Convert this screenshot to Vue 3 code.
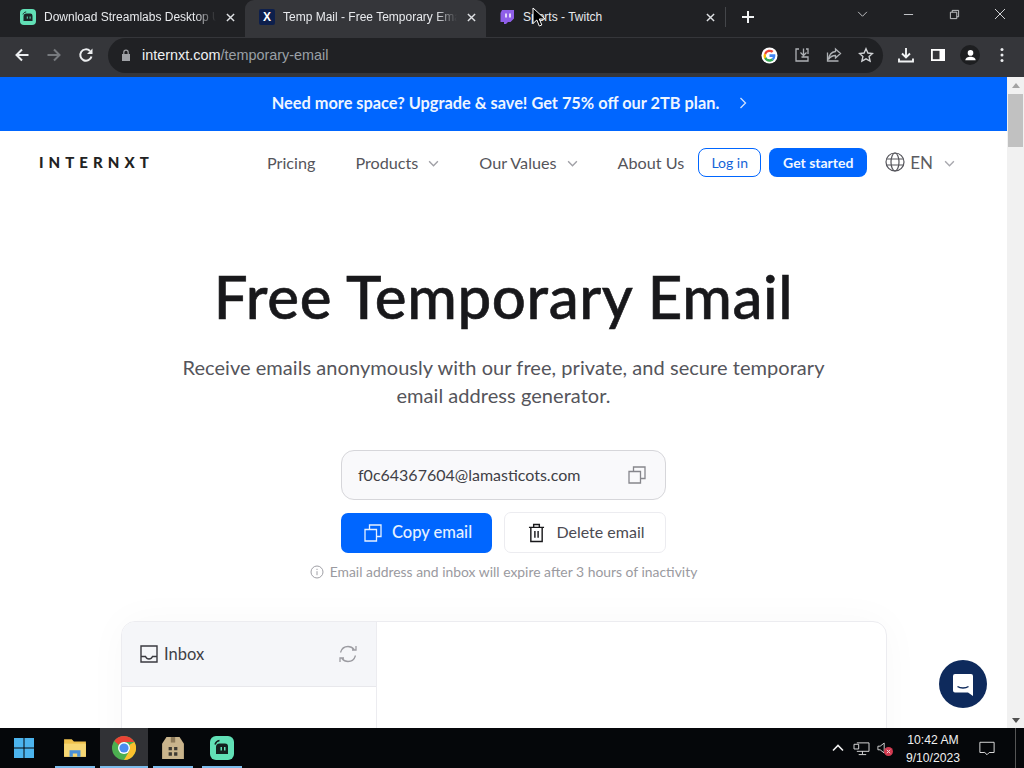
<template>
  <div class="screen">
    <div class="tabbar">
      <div class="tab first">
        <svg class="fav" viewBox="0 0 16 16"><rect width="16" height="16" rx="4" fill="#61e0b6"/><path d="M3.500 12V7.500a3 3 0 0 1 3-3h3.700a2.300 2.300 0 0 1 2.300 2.300V12z" fill="#1b2527"/><path d="M3 5.500C3.500 3.800 4.800 3 6.200 3" fill="none" stroke="#1b2527" stroke-width="1"/><rect x="6.800" y="7.500" width="1" height="2.200" fill="#61e0b6"/><rect x="9.600" y="7.500" width="1" height="2.200" fill="#61e0b6"/></svg>
        <span class="tab-title">Download Streamlabs Desktop UI</span>
        <svg class="tab-x" viewBox="0 0 10 10"><path d="M1 1l8 8M9 1l-8 8"/></svg>
      </div>
      <div class="tab active">
        <span class="fav xfav">X</span>
        <span class="tab-title">Temp Mail - Free Temporary Email</span>
        <svg class="tab-x" viewBox="0 0 10 10"><path d="M1 1l8 8M9 1l-8 8"/></svg>
      </div>
      <div class="tab third">
        <svg class="fav" viewBox="0 0 16 16"><path d="M3 1h12v8.500L11.500 13H9l-2 2H5v-2H1.500V4z" fill="#8f5fe8"/><path d="M7 4.500v4M11 4.500v4" stroke="#fff" stroke-width="1.500"/></svg>
        <span class="tab-title">Sports - Twitch</span>
        <svg class="tab-x" viewBox="0 0 10 10"><path d="M1 1l8 8M9 1l-8 8"/></svg>
      </div>
      <div class="tab-sep"></div>
      <svg class="plus" viewBox="0 0 14 14"><path d="M7 1v12M1 7h12"/></svg>
      <div class="spacer"></div>
      <svg class="win-ic chev" viewBox="0 0 12 8"><path d="M1 1l5 5 5-5"/></svg>
      <svg class="win-ic min" viewBox="0 0 12 12"><path d="M1 6h10"/></svg>
      <svg class="win-ic max" viewBox="0 0 12 12"><path d="M1.500 3.500h7v7h-7zM3.500 3.500v-2h7v7h-2"/></svg>
      <svg class="win-ic cls" viewBox="0 0 12 12"><path d="M1 1l10 10M11 1L1 11"/></svg>
    </div>

    <div class="toolbar">
      <svg class="nav back" viewBox="0 0 16 16"><path d="M14.500 8H2.500M8 2.500L2.500 8 8 13.500"/></svg>
      <svg class="nav fwd" viewBox="0 0 16 16"><path d="M1.500 8h12M8 2.500L13.500 8 8 13.500"/></svg>
      <svg class="nav reload" viewBox="0 0 16 16"><path d="M13.500 9.500A5.700 5.700 0 1 1 12 4"/><path class="fill" d="M14.500 1.500v5.500H9z"/></svg>
      <div class="omnibox">
        <svg class="lock" viewBox="0 0 10 12"><path d="M1 5h8v7H1z" fill="#a0a2a6"/><path d="M2.800 5V3.400a2.200 2.200 0 0 1 4.400 0V5" fill="none" stroke="#a0a2a6" stroke-width="1.200"/></svg>
        <span class="url"><b>internxt.com</b>/temporary-email</span>
        <div class="spacer"></div>
        <svg class="omni-ic gicon" viewBox="0 0 18 18"><circle cx="9" cy="9" r="8.500" fill="#fff"/><path d="M15.200 9.200c0-.5 0-1-.1-1.400H9v2.700h3.500a3 3 0 0 1-1.300 2l2 1.600a6.200 6.200 0 0 0 2-4.900z" fill="#4285f4"/><path d="M9 15.500c1.700 0 3.200-.6 4.200-1.600l-2-1.600c-.6.400-1.300.7-2.200.7a3.800 3.800 0 0 1-3.600-2.700l-2.100 1.600A6.400 6.400 0 0 0 9 15.500z" fill="#34a853"/><path d="M5.400 10.800a3.900 3.900 0 0 1 0-2.500L3.300 6.700a6.500 6.500 0 0 0 0 5.700z" fill="#fbbc05"/><path d="M9 5.200c1 0 1.800.3 2.500 1l1.800-1.900A6.400 6.400 0 0 0 3.300 6.700l2.100 1.600A3.800 3.800 0 0 1 9 5.200z" fill="#ea4335"/></svg>
        <svg class="omni-ic line" viewBox="0 0 16 16"><path d="M5 2H2v12h12v-4H7.500M9.500 1.500v7M6.500 5.500l3 3 3-3M12 2h2v5"/></svg>
        <svg class="omni-ic line" viewBox="0 0 16 16"><path d="M9.500 2l5 4.500-5 4.500V8.500C6 8.500 4 10 2.500 12.500 3 8.500 5.500 5 9.500 4.500zM12.500 14H1.500V5.500"/></svg>
        <svg class="omni-ic star" viewBox="0 0 16 16"><path d="M8 1.800l1.900 4.200 4.600.5-3.400 3.100 1 4.500L8 11.800l-4.100 2.300 1-4.500-3.400-3.100 4.600-.5z"/></svg>
      </div>
      <svg class="tool-ic dl" viewBox="0 0 16 16"><path d="M8 1v9M4 6.500L8 10.500 12 6.500M1 11.500v3h14v-3"/></svg>
      <svg class="tool-ic side" viewBox="0 0 16 16"><rect x="1" y="2" width="14" height="12" fill="#fff"/><rect x="2.800" y="3.800" width="6.700" height="8.400" fill="#35363a"/></svg>
      <div class="avatar"><svg viewBox="0 0 16 16"><circle cx="8" cy="5.200" r="3" fill="#fff"/><path d="M2.500 13c0-2.800 3-3.800 5.500-3.800s5.500 1 5.500 3.800z" fill="#fff"/></svg></div>
      <svg class="tool-ic dots" viewBox="0 0 4 16"><circle cx="2" cy="2.500" r="1.500"/><circle cx="2" cy="8" r="1.500"/><circle cx="2" cy="13.500" r="1.500"/></svg>
    </div>

    <div class="viewport">
      <main class="page">
        <div class="banner">
          <span>Need more space? Upgrade &amp; save! Get 75% off our 2TB plan.</span>
          <svg viewBox="0 0 8 12"><path d="M1.500 1l5 5-5 5"/></svg>
        </div>
        <header class="nav-row">
          <div class="logo">INTERNXT</div>
          <nav class="links">
            <a>Pricing</a>
            <a>Products<svg viewBox="0 0 12 8"><path d="M1 1.500l5 5 5-5"/></svg></a>
            <a>Our Values<svg viewBox="0 0 12 8"><path d="M1 1.500l5 5 5-5"/></svg></a>
            <a>About Us</a>
          </nav>
          <button class="login">Log in</button>
          <button class="start">Get started</button>
          <div class="lang">
            <svg class="globe" viewBox="0 0 20 20"><circle cx="10" cy="10" r="9"/><ellipse cx="10" cy="10" rx="4" ry="9"/><path d="M1.500 7h17M1.500 13h17"/></svg>
            <span>EN</span>
            <svg class="lang-chev" viewBox="0 0 12 8"><path d="M1 1.500l5 5 5-5"/></svg>
          </div>
        </header>
        <section class="hero">
          <h1>Free Temporary Email</h1>
          <p class="lead">Receive emails anonymously with our free, private, and secure temporary<br>email address generator.</p>
          <div class="address">
            <span>f0c64367604@lamasticots.com</span>
            <svg viewBox="0 0 18 18"><path d="M1 5.500h11.500V17H1zM5.500 5.500V1H17v11.500h-4.500"/></svg>
          </div>
          <div class="actions">
            <button class="copy"><svg viewBox="0 0 18 18"><path d="M1 5.500h11.500V17H1zM5.500 5.500V1H17v11.500h-4.500"/></svg>Copy email</button>
            <button class="delete"><svg viewBox="0 0 18 20"><path d="M1 4h16M3 4v15h12V4M6 4V1h6v3M7.300 8v7M10.700 8v7"/></svg>Delete email</button>
          </div>
          <div class="note">
            <svg viewBox="0 0 14 14"><circle cx="7" cy="7" r="6"/><path d="M7 6.200v4M7 3.800v1.200"/></svg>
            <span>Email address and inbox will expire after 3 hours of inactivity</span>
          </div>
        </section>
        <div class="inbox-card">
          <aside class="side-col">
            <div class="side-head">
              <svg class="tray" viewBox="0 0 18 18"><path d="M1 1h16v16H1zM1 11.500h4.500c.8 2 2 2.500 3.500 2.500s2.700-.5 3.500-2.500H17"/></svg>
              <span>Inbox</span>
              <div class="spacer"></div>
              <svg class="refresh" viewBox="0 0 20 20"><path d="M2.500 8.500C3.500 5 6.500 2.500 10 2.500c2.500 0 4.500 1 6 3M18 2v4h-4M17.500 11.500C16.500 15 13.500 17.500 10 17.500c-2.500 0-4.500-1-6-3M2 18v-4h4"/></svg>
            </div>
          </aside>
        </div>
        <button class="chat">
          <svg viewBox="0 0 22 24"><path d="M3 1h16a2 2 0 0 1 2 2v20l-5-3.500H3a2 2 0 0 1-2-2V3a2 2 0 0 1 2-2z" fill="#fff"/><path d="M5.500 13.500c3 2 8 2 11 0" fill="none" stroke="#0e2a5c" stroke-width="1.500"/></svg>
        </button>
      </main>
      <div class="scrollbar">
        <div class="sb-up"></div>
        <div class="sb-thumb"></div>
        <div class="spacer"></div>
        <div class="sb-down"></div>
      </div>
    </div>

    <footer class="taskbar">
      <div class="task-item start-btn">
        <svg viewBox="0 0 20 20"><path d="M0 0h9.500v9.500H0zM10.500 0H20v9.500h-9.500zM0 10.500h9.500V20H0zM10.500 10.500H20V20h-9.500z" fill="#4cb4ee"/></svg>
      </div>
      <div class="task-item open">
        <svg viewBox="0 0 22 20"><path d="M1 2h7l2 2h11v14H1z" fill="#f0c24e"/><path d="M1 6h20v12H1z" fill="#f7d774"/><path d="M6 18v-6h10v6h-3v-3H9v3z" fill="#4a90d9"/></svg>
      </div>
      <div class="task-item open current">
        <svg viewBox="0 0 24 24"><circle cx="12" cy="12" r="12" fill="#4caf50"/><path d="M12 0a12 12 0 0 1 10.400 6H12a6 6 0 0 0-5.200 3L2.300 5A12 12 0 0 1 12 0z" fill="#ea4335"/><path d="M22.400 6A12 12 0 0 1 12 24l5.200-9a6 6 0 0 0 0-6z" fill="#fbc02d"/><circle cx="12" cy="12" r="6" fill="#fff"/><circle cx="12" cy="12" r="4.600" fill="#4a8cf0"/></svg>
      </div>
      <div class="task-item open">
        <svg viewBox="0 0 22 22"><path d="M5 1h12l4 6v14H1V7z" fill="#c9b48c"/><path d="M9 1h4v5H9z" fill="#8d7a5a"/><path d="M7 10h3v3H7zM12 10h3v3h-3zM7 15h3v3H7zM12 15h3v3h-3z" fill="#3d3a33"/></svg>
      </div>
      <div class="task-item open">
        <svg viewBox="0 0 24 24"><rect width="24" height="24" rx="6" fill="#61e0b6"/><path d="M6 18v-7a3.500 3.500 0 0 1 3.500-3.500h5.500a3 3 0 0 1 3 3V18z" fill="#14201f"/><path d="M5 8.500C5.800 6 7.500 4.800 9.500 4.500" fill="none" stroke="#14201f" stroke-width="1.500"/><rect x="10.500" y="11" width="1.500" height="3.500" fill="#61e0b6"/><rect x="14" y="11" width="1.500" height="3.500" fill="#61e0b6"/></svg>
      </div>
      <div class="spacer"></div>
      <div class="tray-icons">
        <svg class="t-up" viewBox="0 0 12 8"><path d="M1 6.500l5-5 5 5"/></svg>
        <svg class="t-net" viewBox="0 0 18 16"><path d="M4 2h13v9H4M10 11v3M6 14.500h8M1 3.500h5v5H1z"/></svg>
        <div class="t-vol">
          <svg viewBox="0 0 10 14"><path d="M1 5h2.500L8 1.500v11L3.500 9H1z"/></svg>
          <svg class="t-mute" viewBox="0 0 9 9"><circle cx="4.500" cy="4.500" r="4.500" fill="#d23a50"/><path d="M2.800 2.800l3.400 3.400M6.200 2.800l-3.400 3.400" stroke="#f5d5da" stroke-width="1"/></svg>
        </div>
      </div>
      <div class="clock"><span>10:42 AM</span><span>9/10/2023</span></div>
      <svg class="notif" viewBox="0 0 18 16"><path d="M1 1h16v11.500h-5.500L9 15l-2.500-2.500H1z"/></svg>
      <div class="peek"></div>
    </footer>

    <svg class="cursor" viewBox="0 0 14 22"><path d="M1 1v15.500l3.800-3.500 2.500 6 2.500-1-2.500-6H13z" fill="#000" stroke="#fff" stroke-width="1"/></svg>
  </div>
</template>

<script setup>
</script>

<style>
html, body { margin: 0; overflow: hidden; }
</style>

<style scoped>
.screen { position: relative; width: 1024px; height: 768px; overflow: hidden; display: flex; flex-direction: column; font-family: Lato, "Open Sans", sans-serif; background: #fff; }
.spacer { flex: 1; }
svg { display: block; flex: none; }
button { font-family: inherit; border: none; padding: 0; flex: none; }

.tabbar { height: 37px; background: #202124; display: flex; align-items: center; padding-left: 8px; box-sizing: border-box; flex: none; }
.tab { height: 37px; width: 239px; flex: none; box-sizing: border-box; padding: 0 8px 3px 12px; display: flex; align-items: center; color: #e8eaed; font: 12px "Liberation Sans", Arial, sans-serif; }
.tab.first { width: 237px; background: #202124; }
.tab.active { width: 241px; background: #35363a; border-radius: 9px 9px 0 0; padding-left: 14px; }
.tab.third { width: 239px; padding-left: 13px; }
.fav { width: 16px; height: 16px; margin-right: 8px; flex: none; }
.xfav { background: #0d1f4c; color: #fff; font: bold 12px/16px "Liberation Sans", sans-serif; text-align: center; border-radius: 2px; }
.tab-title { flex: 1; white-space: nowrap; overflow: hidden; -webkit-mask-image: linear-gradient(90deg, #000 88%, transparent 100%); mask-image: linear-gradient(90deg, #000 88%, transparent 100%); }
.third .tab-title { -webkit-mask-image: none; mask-image: none; }
.tab-x { width: 9px; height: 9px; margin-left: 10px; margin-right: 2px; fill: none; stroke: #dfe1e4; stroke-width: 1.600; }
.tab-sep { width: 1px; height: 20px; background: #44464a; margin-top: -3px; }
.plus { width: 14px; height: 14px; margin-left: 15px; margin-top: -3px; fill: none; stroke: #f1f3f4; stroke-width: 2; }
.win-ic { fill: none; stroke: #d0d2d5; stroke-width: 1; margin-top: -9px; }
.chev { width: 11px; height: 7px; }
.min { width: 11px; height: 11px; margin-left: 35px; }
.max { width: 11px; height: 11px; margin-left: 35px; }
.cls { width: 12px; height: 12px; margin-left: 34px; margin-right: 18px; }

.toolbar { height: 40px; background: #35363a; display: flex; align-items: center; flex: none; box-sizing: border-box; padding: 0 0 4px 14px; }
.nav { width: 16px; height: 16px; fill: none; stroke: #eceef0; stroke-width: 2; }
.nav.fwd { stroke: #777a7e; margin-left: 16px; }
.nav.reload { margin-left: 16px; }
.nav.reload .fill { fill: #eceef0; stroke: none; }
.omnibox { width: 775px; height: 35px; margin-left: 14px; background: #202124; border-radius: 18px; display: flex; align-items: center; padding-left: 13px; box-sizing: border-box; }
.lock { width: 10px; height: 12px; }
.url { margin-left: 11px; font: 14.400px "Liberation Sans", Arial, sans-serif; color: #9aa0a6; white-space: nowrap; }
.url b { font-weight: 400; color: #eef0f2; }
.omni-ic { width: 16px; height: 16px; margin-right: 16px; }
.gicon { width: 17px; height: 17px; }
.omni-ic.line { fill: none; stroke: #aeb1b5; stroke-width: 1.300; }
.omni-ic.star { margin-right: 9px; fill: none; stroke: #cfd1d4; stroke-width: 1.400; }
.tool-ic { flex: none; }
.dl { width: 16px; height: 16px; margin-left: 15px; fill: none; stroke: #f1f3f4; stroke-width: 1.900; }
.side { width: 16px; height: 16px; margin-left: 16px; }
.avatar { width: 20px; height: 20px; margin-left: 14px; border-radius: 50%; background: #1d1e20; display: flex; align-items: center; justify-content: center; }
.avatar svg { width: 15px; height: 15px; }
.dots { width: 4px; height: 16px; margin-left: 20px; fill: #eceef0; }

.viewport { flex: 1; display: flex; min-height: 0; }
.page { position: relative; width: 1007px; flex: none; display: flex; flex-direction: column; overflow: hidden; background: #fff; color: #18181b; }
.banner { height: 54px; flex: none; box-sizing: border-box; background: #0066ff; color: #eef5ff; display: flex; align-items: center; justify-content: center; gap: 20px; font-size: 16.350px; font-weight: 700; padding: 0 0 3px 12px; }
.banner svg { width: 8px; height: 12px; fill: none; stroke: #cfe2ff; stroke-width: 1.300; }
.nav-row { height: 64px; flex: none; box-sizing: border-box; display: flex; align-items: center; padding: 0 0 2px 39px; }
.logo { font-size: 15px; font-weight: 900; letter-spacing: 5.050px; color: #222; width: 228px; flex: none; white-space: nowrap; }
.links { display: flex; gap: 40px; font-size: 16.200px; color: #55555b; }
.links a { display: flex; align-items: center; gap: 10px; white-space: nowrap; }
.links svg { width: 11px; height: 7px; fill: none; stroke: #a0a0a6; stroke-width: 1.600; margin-top: 2px; }
.login { width: 63px; height: 29px; margin-left: 14px; background: #fff; border: 1px solid #0066ff; border-radius: 8px; font-size: 14px; color: #1464d8; }
.start { width: 98px; height: 29px; margin-left: 8px; background: #0066ff; border-radius: 8px; font-size: 14px; font-weight: 700; color: #f0f6ff; }
.lang { display: flex; align-items: center; margin-left: 18px; color: #5c5c62; font-size: 17px; }
.globe { width: 20px; height: 20px; fill: none; stroke: #55555b; stroke-width: 1.200; margin-right: 5px; }
.lang-chev { width: 11px; height: 7px; margin-left: 11px; fill: none; stroke: #a8a8ae; stroke-width: 1.600; margin-top: 2px; }

.hero { display: flex; flex-direction: column; align-items: center; flex: none; }
h1 { margin: 64px 0 0; font-size: 60px; line-height: 74px; font-weight: 500; color: #18181b; letter-spacing: .6px; white-space: nowrap; -webkit-text-stroke: .6px #18181b; }
.lead { margin: 20px 0 0; font-size: 20px; line-height: 28px; text-align: center; color: #55555b; letter-spacing: .05px; }
.address { width: 325px; height: 50px; margin-top: 41px; box-sizing: border-box; background: #f9f9fb; border: 1px solid #d6d6da; border-radius: 13px; display: flex; align-items: center; justify-content: space-between; padding: 0 19px 2px 16px; font-size: 16px; color: #3f3f46; }
.address svg { width: 18px; height: 18px; margin-top: 2px; fill: none; stroke: #86868c; stroke-width: 1.300; }
.actions { width: 325px; display: flex; justify-content: space-between; align-items: flex-end; margin-top: 13px; height: 40px; }
.actions button { border-radius: 7px; display: flex; align-items: center; justify-content: center; padding-bottom: 2px; box-sizing: border-box; }
.copy { width: 151px; height: 40px; background: #0066ff; color: #e6f0ff; gap: 10px; font-weight: 500; font-size: 16.500px; padding-left: 3px !important; }
.copy svg { width: 18px; height: 18px; margin-top: 2px; fill: none; stroke: #e6f0ff; stroke-width: 1.300; }
.delete { width: 162px; height: 41px; background: #fff; border: 1px solid #ececf0 !important; color: #4b4b52; gap: 11px; font-size: 16px; padding-left: 3px !important; }
.delete svg { width: 17px; height: 20px; margin-top: 2px; fill: none; stroke: #18181b; stroke-width: 1.500; }
.note { margin-top: 10px; display: flex; align-items: center; gap: 6px; font-size: 13.900px; color: #9a9aa0; line-height: 17px; }
.note svg { width: 14px; height: 14px; fill: none; stroke: #a0a0a6; stroke-width: 1; }

.inbox-card { margin: 41px 0 0 121px; width: 766px; height: 200px; flex: none; box-sizing: border-box; border: 1px solid #ececf0; border-radius: 14px 14px 0 0; overflow: hidden; box-shadow: 0 0 40px rgba(0, 0, 0, .03); }
.side-col { width: 255px; box-sizing: border-box; height: 100%; border-right: 1px solid #ececf0; }
.side-head { height: 65px; box-sizing: border-box; background: #f5f6f9; border-bottom: 1px solid #e8e8ec; display: flex; align-items: center; padding: 0 18px; font-size: 16.500px; color: #3f3f46; }
.tray { width: 18px; height: 18px; margin-right: 6px; fill: none; stroke: #3a3a40; stroke-width: 1.400; }
.refresh { width: 20px; height: 20px; fill: none; stroke: #9c9ca2; stroke-width: 1.300; }
.chat { position: absolute; left: 939px; top: 583px; width: 48px; height: 48px; border-radius: 50%; background: #0e2a5c; display: flex; align-items: center; justify-content: center; }
.chat svg { width: 22px; height: 24px; margin-top: 2px; }

.scrollbar { width: 17px; flex: none; background: #f1f1f1; display: flex; flex-direction: column; align-items: center; }
.sb-up { width: 0; height: 0; border: 4px solid transparent; border-top: none; border-bottom: 5px solid #a3a3a3; margin-top: 6px; }
.sb-thumb { width: 15px; height: 53px; background: #c1c1c1; margin-top: 6px; }
.sb-down { width: 0; height: 0; border: 4px solid transparent; border-bottom: none; border-top: 5px solid #505050; margin-bottom: 5px; }

.taskbar { height: 40px; flex: none; background: #05070a; display: flex; align-items: center; position: relative; color: #eee; }
.task-item { position: relative; width: 48px; height: 40px; flex: none; display: flex; align-items: center; justify-content: center; box-sizing: border-box; margin-right: 1px; }
.task-item svg { width: 24px; height: 24px; }
.start-btn svg { width: 20px; height: 20px; }
.start-btn { margin-right: 3px; }
.open::after { content: ""; position: absolute; left: 4px; right: 4px; bottom: 0; height: 2px; background: #7cbcec; }
.current { background: #313236; }
.current::after { left: 0; right: 0; }
.tray-icons { display: flex; align-items: center; }
.t-up { width: 12px; height: 8px; fill: none; stroke: #f0f0f0; stroke-width: 1.600; }
.t-net { width: 17px; height: 15px; margin-left: 9px; fill: none; stroke: #e0e0e0; stroke-width: 1; }
.t-vol { position: relative; width: 18px; height: 14px; margin-left: 7px; }
.t-vol svg { width: 9px; height: 14px; fill: none; stroke: #e0e0e0; stroke-width: 1; }
.t-vol .t-mute { position: absolute; left: 7px; top: 6px; width: 9px; height: 9px; stroke: none; }
.clock { display: flex; flex-direction: column; align-items: center; width: 62px; margin-left: 7px; padding-top: 1px; font: 12.200px/18px "Liberation Sans", Arial, sans-serif; color: #f0f0f0; }
.notif { width: 16px; height: 15px; margin-left: 15px; margin-right: 29px; fill: none; stroke: #f0f0f0; stroke-width: 1; }
.peek { position: absolute; right: 8px; top: 0; bottom: 0; width: 1px; background: #555; }
.cursor { position: absolute; left: 532px; top: 7px; width: 14px; height: 22px; }
</style>
